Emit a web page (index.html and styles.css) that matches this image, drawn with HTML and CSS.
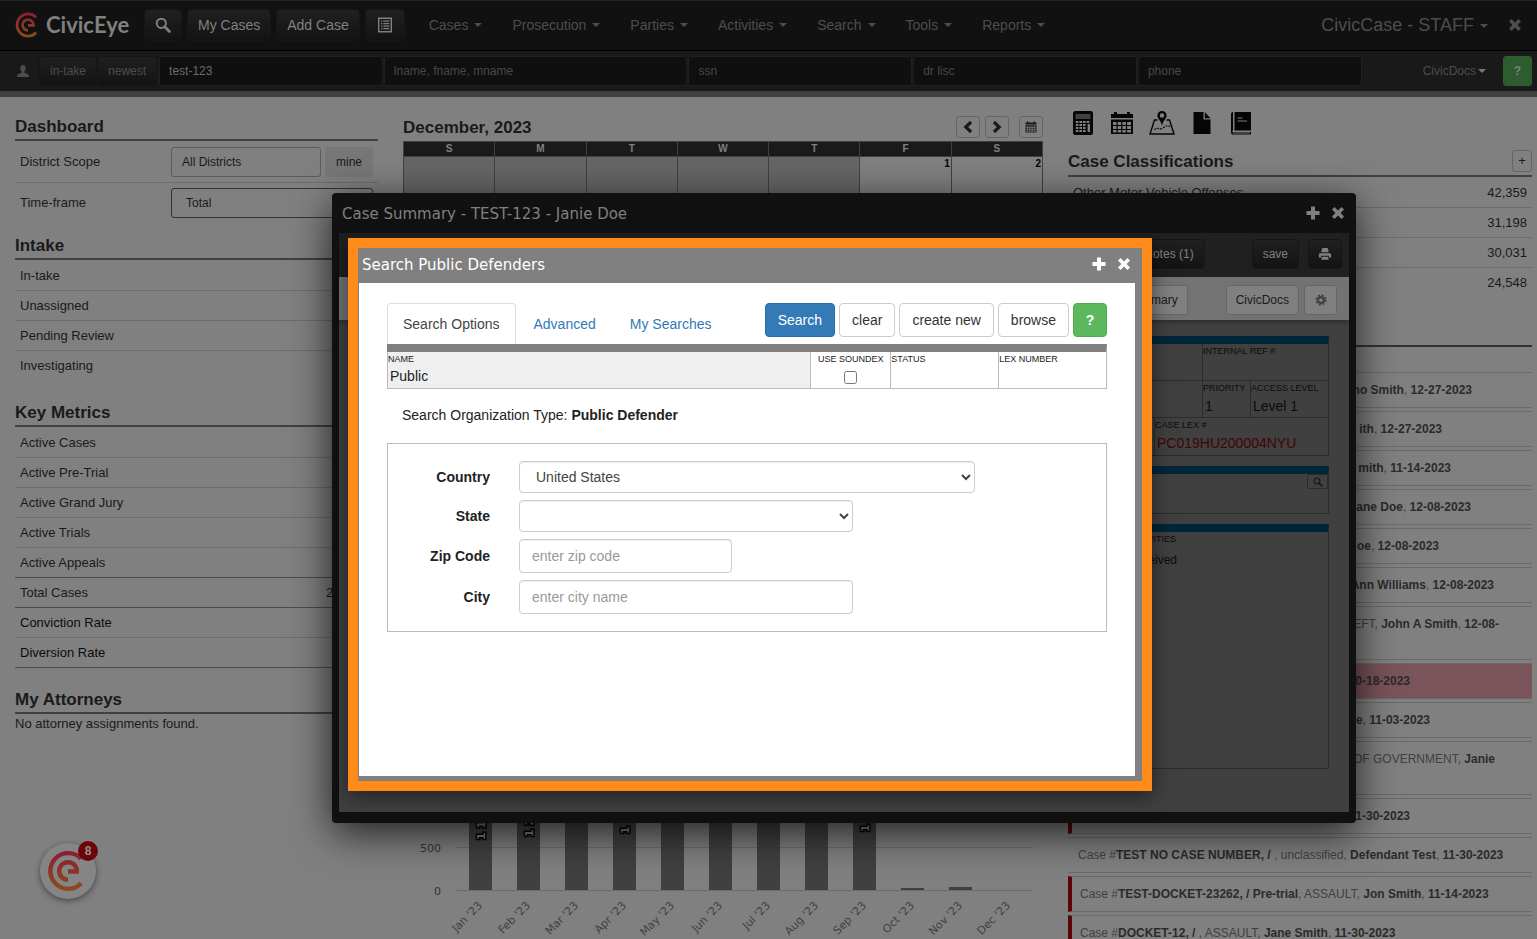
FILE: index.html
```html
<!DOCTYPE html>
<html lang="en">
<head>
<meta charset="utf-8">
<title>CivicCase - Search Public Defenders</title>
<link rel="stylesheet" href="styles.css">
</head>
<body>
<svg class="defs" width="0" height="0" aria-hidden="true">
  <defs>
    <linearGradient id="brand" x1="0" y1="0" x2="0" y2="40" gradientUnits="userSpaceOnUse">
      <stop offset="0" stop-color="#8a1c34"/><stop offset=".5" stop-color="#8c3426"/><stop offset="1" stop-color="#8a4e1c"/>
    </linearGradient>
    <symbol id="mark" viewBox="0 0 40 40">
      <g fill="none" stroke="url(#brand)" stroke-width="4.2">
        <path d="M32.6 8.400A17 17 0 1 0 32.6 31.600"/>
        <path d="M20 20.500H28.400A8.400 8.400 0 1 0 20 28.400"/>
      </g>
    </symbol>
    <symbol id="search" viewBox="0 0 16 16"><circle cx="6.3" cy="6.3" r="4.6" fill="none" stroke="currentColor" stroke-width="2"/><path d="M9.8 9.8L14.4 14.4" stroke="currentColor" stroke-width="2.8" stroke-linecap="round"/></symbol>
    <symbol id="list" viewBox="0 0 16 16"><path fill="none" stroke="currentColor" stroke-width="1.4" d="M1.7 1.2H14.3V14.8H1.7Z"/><path stroke="currentColor" stroke-width="1.3" d="M4 4.2H5.3M6.3 4.2H12.3M4 6.7H5.3M6.3 6.7H12.3M4 9.2H5.3M6.3 9.2H12.3M4 11.7H5.3M6.3 11.7H12.3"/></symbol>
    <symbol id="user" viewBox="0 0 16 16"><path fill="currentColor" d="M8 1C5.800 1 4.700 2.600 4.900 4.900C5 6.600 5.700 8 6.500 8.700V10.100L2.300 11.800C1.400 12.300 1.200 13.300 1.200 14.800H14.800C14.800 13.300 14.600 12.300 13.700 11.800L9.500 10.100V8.700C10.300 8 11 6.600 11.100 4.900C11.300 2.600 10.200 1 8 1Z"/></symbol>
    <symbol id="plus" viewBox="0 0 16 16"><path fill="currentColor" d="M6 1.500H10V6H14.500V10H10V14.500H6V10H1.500V6H6Z"/></symbol>
    <symbol id="cross" viewBox="0 0 16 16"><path fill="currentColor" d="M4.500 2L8 5.400L11.500 2L14 4.500L10.600 8L14 11.500L11.500 14L8 10.600L4.500 14L2 11.500L5.400 8L2 4.500Z"/></symbol>
    <symbol id="left" viewBox="0 0 16 16"><path fill="none" stroke="currentColor" stroke-width="3.600" d="M11.500 2.300L5.500 8L11.500 13.700"/></symbol>
    <symbol id="right" viewBox="0 0 16 16"><path fill="none" stroke="currentColor" stroke-width="3.600" d="M4.500 2.300L10.500 8L4.500 13.700"/></symbol>
    <symbol id="print" viewBox="0 0 16 16"><path fill="currentColor" d="M5 1H11L12 4V6H4V4Z"/><path fill="currentColor" d="M2 7H14L15 8V12H12.500V10H3.500V12H1V8Z"/><path fill="currentColor" d="M4.500 11H11.500L12.300 14.500H3.700Z"/></symbol>
    <symbol id="cog" viewBox="0 0 16 16"><circle cx="8" cy="8" r="3.900" fill="none" stroke="currentColor" stroke-width="2.800"/><circle cx="8" cy="8" r="6.200" fill="none" stroke="currentColor" stroke-width="2.400" stroke-dasharray="2.600 2.270"/></symbol>
    <symbol id="calendar" viewBox="0 0 24 24"><path fill="currentColor" fill-rule="evenodd" d="M1 3H4V1H7V3H17V1H20V3H23V7H1ZM1 8.500H23V23H1ZM3 11V14H6.500V11ZM7.700 11V14H11.200V11ZM12.400 11V14H15.900V11ZM17.100 11V14H21V11ZM3 15V18H6.500V15ZM7.700 15V18H11.200V15ZM12.400 15V18H15.900V15ZM17.100 15V18H21V15ZM3 19V21.500H6.500V19ZM7.700 19V21.500H11.200V19ZM12.400 19V21.500H15.900V19ZM17.100 19V21.500H21V19Z"/></symbol>
    <symbol id="calc" viewBox="0 0 24 24"><rect x="2" y="0" width="20" height="24" rx="2.500" fill="currentColor"/><rect x="4.500" y="3" width="15" height="5" fill="#404040"/><path stroke="#808080" stroke-width="2" stroke-dasharray="2.600 1" d="M4.800 11H19.400M4.800 14H15.500M4.800 17H15.500M4.800 20H15.500"/><path stroke="#808080" stroke-width="2.400" d="M17.800 13V21"/></symbol>
    <symbol id="map" viewBox="0 0 26 24"><path fill="none" stroke="currentColor" stroke-width="1.400" d="M8.500 9H5.500L1 23H25L20.500 9H17.500"/><path fill="none" stroke="currentColor" stroke-width="1.300" stroke-dasharray="1.800 1.200" d="M5.500 18.500C9 16 11 19 14 17S18 14 21 15.500"/><path fill="currentColor" fill-rule="evenodd" d="M13 0A4.600 4.600 0 0 1 17.600 4.600C17.600 8 13.800 9.500 13 15C12.200 9.500 8.400 8 8.400 4.600A4.600 4.600 0 0 1 13 0ZM13 2.200A2.300 2.300 0 1 0 13 6.800A2.300 2.300 0 1 0 13 2.200Z"/></symbol>
    <symbol id="file" viewBox="0 0 24 24"><path fill="currentColor" d="M3.500 1H13.500V8.500H20.500V23H3.500ZM14.800 1L20.500 7.200H14.800Z"/></symbol>
    <symbol id="book" viewBox="0 0 24 24"><path fill="currentColor" fill-rule="evenodd" d="M2 3Q2 1 4 1V19.500Q2.800 19.800 3.200 21H22V23.500H4Q2 23.500 2 21.500ZM5.500 1H22V19.500H5.500Z"/><path stroke="#808080" stroke-width="1.200" d="M8.500 7H13.500M8.500 10H18M4 22H21"/></symbol>
  </defs>
</svg>

<header>
  <nav class="navbar">
    <a class="brand" href="#"><svg class="brand-mark"><use href="#mark"/></svg><span>CivicEye</span></a>
    <button class="dark-btn nav-btn" aria-label="Search"><svg class="i16"><use href="#search"/></svg></button>
    <button class="dark-btn nav-btn">My Cases</button>
    <button class="dark-btn nav-btn">Add Case</button>
    <button class="dark-btn nav-btn nav-list" aria-label="List"><svg class="i16"><use href="#list"/></svg></button>
    <ul class="menu">
      <li><a class="caret" href="#">Cases</a></li>
      <li><a class="caret" href="#">Prosecution</a></li>
      <li><a class="caret" href="#">Parties</a></li>
      <li><a class="caret" href="#">Activities</a></li>
      <li><a class="caret" href="#">Search</a></li>
      <li><a class="caret" href="#">Tools</a></li>
      <li><a class="caret" href="#">Reports</a></li>
    </ul>
    <a class="caret staff" href="#">CivicCase - STAFF</a>
    <button class="plain-btn nav-close" aria-label="Close"><svg class="i16"><use href="#cross"/></svg></button>
  </nav>
  <form class="quickbar">
    <button type="button" class="dark-btn quick-btn user-btn" aria-label="Person"><svg class="i14"><use href="#user"/></svg></button>
    <button type="button" class="dark-btn quick-btn">in-take</button>
    <button type="button" class="dark-btn quick-btn">newest</button>
    <div class="quick-fields">
      <input type="text" value="test-123" aria-label="Case number">
      <input type="text" placeholder="lname, fname, mname" aria-label="Name">
      <input type="text" placeholder="ssn" aria-label="SSN">
      <input type="text" placeholder="dr lisc" aria-label="Driver license">
      <input type="text" placeholder="phone" aria-label="Phone">
    </div>
    <button type="button" class="plain-btn docs-btn caret">CivicDocs</button>
    <button type="button" class="help-dim">?</button>
  </form>
</header>

<main class="columns">
  <div class="col">
    <section class="scope">
      <h2>Dashboard</h2>
      <div class="scope-row"><label for="district">District Scope</label>
        <div class="scope-ctl"><select id="district"><option>All Districts</option></select><button class="mine">mine</button></div></div>
      <div class="scope-row"><label for="frame">Time-frame</label>
        <div class="scope-ctl"><select id="frame" class="frame"><option>Total</option></select></div></div>
    </section>
    <section>
      <h2>Intake</h2>
      <table class="rows">
        <tr><td>In-take</td></tr><tr><td>Unassigned</td></tr><tr><td>Pending Review</td></tr><tr class="last"><td>Investigating</td></tr>
      </table>
    </section>
    <section>
      <h2>Key Metrics</h2>
      <table class="rows">
        <tr><td>Active Cases</td><td></td></tr><tr><td>Active Pre-Trial</td><td></td></tr><tr><td>Active Grand Jury</td><td></td></tr><tr><td>Active Trials</td><td></td></tr>
        <tr class="strong"><td>Active Appeals</td><td></td></tr><tr class="strong"><td>Total Cases</td><td class="num">222,195</td></tr>
        <tr class="rate"><td>Conviction Rate</td><td></td></tr><tr class="strong rate"><td>Diversion Rate</td><td></td></tr>
      </table>
    </section>
    <section>
      <h2>My Attorneys</h2>
      <p class="note">No attorney assignments found.</p>
    </section>
  </div>

  <div class="col middle">
    <div class="cal-head"><h3>December, 2023</h3>
      <button class="mini" aria-label="Previous month"><svg class="i14"><use href="#left"/></svg></button>
      <button class="mini" aria-label="Next month"><svg class="i14"><use href="#right"/></svg></button>
      <button class="mini mini-cal" aria-label="Calendar"><svg class="i12"><use href="#calendar"/></svg></button>
    </div>
    <table class="calendar">
      <thead><tr><th>S</th><th>M</th><th>T</th><th>W</th><th>T</th><th>F</th><th>S</th></tr></thead>
      <tbody><tr><td class="out"></td><td class="out"></td><td class="out"></td><td class="out"></td><td class="out"></td><td>1</td><td>2</td></tr></tbody>
    </table>
    <svg class="chart" viewBox="0 0 640 180" role="img" aria-label="Cases by month">
      <path stroke="#6c6c6c" d="M53 88.500H630"/>
      <g fill="#404040">
        <rect x="66" y="30" width="23" height="101"/><rect x="114" y="30" width="23" height="101"/><rect x="162" y="30" width="23" height="101"/><rect x="210" y="30" width="23" height="101"/><rect x="258" y="30" width="23" height="101"/><rect x="306" y="30" width="23" height="101"/><rect x="354" y="30" width="23" height="101"/><rect x="402" y="30" width="23" height="101"/><rect x="450" y="30" width="23" height="101"/><rect x="498" y="129" width="23" height="2"/><rect x="546" y="128" width="23" height="3"/>
      </g>
      <path stroke="#666c74" d="M53 131.500H630"/>
      <g class="axis"><text x="38" y="93" text-anchor="end">500</text><text x="38" y="136" text-anchor="end">0</text></g>
      <g class="month" text-anchor="end">
        <text transform="translate(80 147) rotate(-45)">Jan '23</text><text transform="translate(128 147) rotate(-45)">Feb '23</text><text transform="translate(176 147) rotate(-45)">Mar '23</text><text transform="translate(224 147) rotate(-45)">Apr '23</text><text transform="translate(272 147) rotate(-45)">May '23</text><text transform="translate(320 147) rotate(-45)">Jun '23</text><text transform="translate(368 147) rotate(-45)">Jul '23</text><text transform="translate(416 147) rotate(-45)">Aug '23</text><text transform="translate(464 147) rotate(-45)">Sep '23</text><text transform="translate(512 147) rotate(-45)">Oct '23</text><text transform="translate(560 147) rotate(-45)">Nov '23</text><text transform="translate(608 147) rotate(-45)">Dec '23</text>
      </g>
      <g class="count">
        <text transform="translate(82 81) rotate(-90)">1 1</text><text transform="translate(130 78) rotate(-90)">1 2</text><text transform="translate(226 75) rotate(-90)">1</text><text transform="translate(466 73) rotate(-90)">1</text>
      </g>
    </svg>
  </div>

  <div class="col">
    <div class="tools">
      <a href="#" aria-label="Calculator"><svg class="i24"><use href="#calc"/></svg></a>
      <a href="#" aria-label="Calendar"><svg class="i24"><use href="#calendar"/></svg></a>
      <a href="#" aria-label="Map"><svg class="i26"><use href="#map"/></svg></a>
      <a href="#" aria-label="File"><svg class="i24"><use href="#file"/></svg></a>
      <a href="#" aria-label="Book"><svg class="i24"><use href="#book"/></svg></a>
    </div>
    <section class="classes">
      <div class="class-head"><h2>Case Classifications</h2><button class="mini mini-plus">+</button></div>
      <table class="rows">
        <tr><td>Other Motor Vehicle Offenses</td><td class="num">42,359</td></tr><tr><td></td><td class="num">31,198</td></tr><tr><td></td><td class="num">30,031</td></tr><tr class="last"><td></td><td class="num">24,548</td></tr>
      </table>
    </section>
    <ul class="feed">
      <li class="tail" style="--end:60px"><b>no Smith</b>, <b>12-27-2023</b></li>
      <li class="tail" style="--end:90px"><b>ith</b>, <b>12-27-2023</b></li>
      <li class="tail" style="--end:81px"><b>mith</b>, <b>11-14-2023</b></li>
      <li class="tail" style="--end:61px"><b>Jane Doe</b>, <b>12-08-2023</b></li>
      <li class="tail" style="--end:93px"><b>oe</b>, <b>12-08-2023</b></li>
      <li class="tail" style="--end:38px"><b>Ann Williams</b>, <b>12-08-2023</b></li>
      <li class="tail tall" style="--end:33px">EFT, <b>John A Smith</b>, <b>12-08-</b></li>
      <li class="tail alert" style="--end:122px"><b>0-18-2023</b></li>
      <li class="tail" style="--end:102px"><b>e</b>, <b>11-03-2023</b></li>
      <li class="tail tall" style="--end:37px">OF GOVERNMENT, <b>Janie</b></li>
      <li class="tail flag" style="--end:122px"><b>1-30-2023</b></li>
      <li>Case #<b>TEST NO CASE NUMBER, /</b> , unclassified, <b>Defendant Test</b>, <b>11-30-2023</b></li>
      <li class="flag">Case #<b>TEST-DOCKET-23262, / Pre-trial</b>, ASSAULT, <b>Jon Smith</b>, <b>11-14-2023</b></li>
      <li class="flag">Case #<b>DOCKET-12, /</b> , ASSAULT, <b>Jane Smith</b>, <b>11-30-2023</b></li>
    </ul>
  </div>
</main>

<button class="chat" aria-label="Help"><svg class="chat-mark"><use href="#mark"/></svg><span class="badge">8</span></button>

<section class="window summary" aria-label="Case Summary">
  <div class="win-title"><h1>Case Summary - TEST-123 - Janie Doe</h1>
    <button class="plain-btn" aria-label="Expand"><svg class="i16"><use href="#plus"/></svg></button><button class="plain-btn" aria-label="Close"><svg class="i16"><use href="#cross"/></svg></button></div>
  <div class="summary-inner">
    <div class="bar-dark"><button class="dark-btn bar-btn notes">Notes (1)</button><button class="dark-btn bar-btn">save</button><button class="dark-btn bar-btn print" aria-label="Print"><svg class="i14"><use href="#print"/></svg></button></div>
    <div class="bar-gray"><button class="gray-btn sum">Summary</button><button class="gray-btn">CivicDocs</button><button class="gray-btn cog" aria-label="Settings"><svg class="i12"><use href="#cog"/></svg></button></div>
    <div class="panels">
      <div class="panel">
        <div class="cells"><div class="cell ref"><span>INTERNAL REF #</span></div></div>
        <div class="cells"><div class="cell pri"><span>PRIORITY</span>1</div><div class="cell acc"><span>ACCESS LEVEL</span>Level 1</div></div>
        <div class="cells"><div class="cell lex"><span>CASE LEX #</span>PC019HU200004NYU</div></div>
      </div>
      <div class="panel short"><button class="find" aria-label="Find"><svg class="i10"><use href="#search"/></svg></button></div>
      <div class="panel grow"><div class="cell act"><span>ACTIVITIES</span><p>Received</p></div></div>
    </div>
  </div>
</section>

<section class="window finder" role="dialog" aria-label="Search Public Defenders">
  <div class="win-title"><h1>Search Public Defenders</h1>
    <button class="plain-btn" aria-label="Expand"><svg class="i16"><use href="#plus"/></svg></button><button class="plain-btn" aria-label="Close"><svg class="i16"><use href="#cross"/></svg></button></div>
  <form class="finder-body">
    <div class="finder-top">
      <div class="tabs"><a class="on" href="#">Search Options</a><a href="#">Advanced</a><a href="#">My Searches</a></div>
      <div class="actions"><button type="button" class="btn primary">Search</button><button type="button" class="btn">clear</button><button type="button" class="btn">create new</button><button type="button" class="btn">browse</button><button type="button" class="btn help">?</button></div>
    </div>
    <div class="criteria">
      <div class="crit name"><label for="name">NAME</label><input id="name" type="text" value="Public"></div>
      <div class="crit sound"><label for="soundex">USE SOUNDEX</label><input id="soundex" type="checkbox"></div>
      <div class="crit"><label for="status">STATUS</label><input id="status" type="text"></div>
      <div class="crit"><label for="lexno">LEX NUMBER</label><input id="lexno" type="text"></div>
    </div>
    <p class="org">Search Organization Type: <b>Public Defender</b></p>
    <div class="address">
      <label for="country">Country</label><select id="country" class="w-lg"><option>United States</option></select>
      <label for="state">State</label><select id="state" class="w-md"><option></option></select>
      <label for="zip">Zip Code</label><input id="zip" class="w-sm" type="text" placeholder="enter zip code">
      <label for="city">City</label><input id="city" class="w-md" type="text" placeholder="enter city name">
    </div>
  </form>
</section>
</body>
</html>
```

FILE: styles.css
```css
* { box-sizing: border-box; }
body {
  margin: 0;
  height: 100vh;
  overflow: hidden;
  position: relative;
  display: flex;
  flex-direction: column;
  background: #808080;
  color: #1a1a1a;
  font: 13px/18px "Liberation Sans", Arial, sans-serif;
}
h1, h2, h3, p, ul { margin: 0; padding: 0; }
ul { list-style: none; }
a { color: inherit; text-decoration: none; }
button, input, select { font: inherit; color: inherit; margin: 0; }
button { display: inline-flex; align-items: center; justify-content: center; padding: 0; }
svg { display: block; flex: none; }
.defs { position: absolute; }
.i10 { width: 10px; height: 10px; }
.i12 { width: 12px; height: 12px; }
.i14 { width: 14px; height: 14px; }
.i16 { width: 16px; height: 16px; }
.i24 { width: 24px; height: 24px; }
.i26 { width: 26px; height: 24px; }

/* top bars */
.navbar {
  display: flex;
  align-items: center;
  height: 51px;
  padding: 0 14px 2px 15px;
  background: #111;
  border-top: 1px solid #222;
  border-bottom: 1px solid #000;
  font-size: 14px;
  color: #4d4d4d;
}
.brand { display: flex; align-items: center; gap: 5px; width: 124px; color: #808080; font: 700 22px/26px Lato, sans-serif; }
.brand-mark { width: 26px; height: 26px; }
.dark-btn {
  border: 1px solid #161616;
  border-radius: 4px;
  background: linear-gradient(#202020, #131313);
  color: #808080;
}
.nav-btn { height: 32px; padding: 0 10px; margin-left: 5px; }
.nav-list { width: 40px; }
.menu { display: flex; margin-left: 9px; }
.menu a { display: block; padding: 0 15px; }
.caret::after {
  content: "";
  display: inline-block;
  margin-left: 6px;
  vertical-align: 3px;
  border: 4px solid transparent;
  border-top-color: currentColor;
  border-bottom: 0;
}
.staff { margin-left: auto; font-size: 18px; }
.plain-btn { border: 0; background: none; }
.nav-close { margin-left: 19px; }
.quickbar {
  display: flex;
  align-items: center;
  height: 46px;
  padding: 0 5px 0 6px;
  background: #191919;
  border-bottom: 6px solid #404040;
  color: #4d4d4d;
  font-size: 12px;
}
.quick-btn { height: 30px; padding: 0 10px; color: #4d4d4d; }
.user-btn { width: 33px; background: #191919; }
.quick-fields { flex: 1; margin-left: 2px; display: grid; grid-template-columns: 224fr 304fr 224fr 224fr 224fr; gap: 1px; }
.quick-fields input {
  min-width: 0;
  height: 30px;
  padding: 0 9px;
  background: #0f0f0f;
  border: 1px solid #202020;
  border-radius: 3px;
  color: #6a6a6a;
}
.quick-fields input::placeholder { color: #484848; opacity: 1; }
.docs-btn { margin: 0 17px 0 61px; }
.docs-btn::after { margin-left: 2px; border-top-color: #777; }
.help-dim { width: 29px; height: 30px; border: 1px solid #2a622a; border-radius: 3px; background: #2d5c2e; color: #808080; font-weight: 700; }

/* dashboard */
.columns {
  flex: 1;
  min-height: 0;
  display: grid;
  grid-template-columns: 363fr 640fr 464fr;
  grid-template-rows: minmax(0, 1fr);
  gap: 25px;
  padding: 0 5px 0 15px;
}
.col { min-width: 0; }
section { margin-bottom: 22px; }
h2, h3 { font-size: 17px; line-height: 20px; }
h2 { padding: 1px 0 2px; border-bottom: 2px solid #404040; }
.scope { margin: 19px 0 11px; }
.scope-row { display: flex; align-items: center; height: 42px; padding: 0 5px; border-bottom: 1px solid #6c6c6c; }
.scope-row:last-child { height: 41px; border: 0; padding-bottom: 1px; }
.scope-row label { width: 151px; }
.scope-ctl { flex: 1; display: flex; gap: 4px; font-size: 12px; }
.scope-ctl select { flex: 1; height: 30px; padding: 0 10px; appearance: none; background: none; border: 1px solid #5c5c5c; border-radius: 3px; }
.scope-ctl .frame { padding: 0 14px; border-color: #333; }
.mine { width: 48px; border: 0; border-radius: 3px; background: #777; }
.rows { width: 100%; margin: 1px 0 -1px; border-spacing: 0; }
.rows td { height: 30px; padding: 0 5px; border-bottom: 1px solid #6c6c6c; }
.rows .last td { border: 0; }
.rows .strong td { border-color: #4c4c4c; }
.rows .rate td { color: #0c0c0c; }
.rows .num { text-align: right; }
.note { padding-top: 1px; }

.middle { display: flex; flex-direction: column; padding-top: 18px; }
.cal-head { display: flex; align-items: center; height: 26px; padding-bottom: 2px; }
.cal-head h3 { flex: 1; padding-top: 2px; }
.mini { width: 24px; height: 22px; margin-left: 5px; border: 1px solid #666; border-radius: 3px; background: none; }
.mini-cal { margin-left: 10px; }
.mini-plus { width: 20px; }
.calendar { width: 100%; table-layout: fixed; border-collapse: collapse; font-weight: 700; font-size: 10px; line-height: 12px; }
.calendar th, .calendar td { border: 1px solid #404040; padding: 0 1px; }
.calendar th { height: 15px; background: #1a1a1a; color: #808080; }
.calendar td { height: 90px; vertical-align: top; text-align: right; color: #000; padding-top: 1px; }
.calendar .out { background: #666; }
.chart { width: 100%; height: auto; margin-top: auto; overflow: visible; }
.chart text { font-family: "DejaVu Sans", sans-serif; font-size: 11px; }
.axis { fill: #333; }
.month { fill: #404040; }
.chart .count text { font-weight: 700; fill: #808080; stroke: #000; stroke-width: 3px; paint-order: stroke; }

.tools { display: flex; gap: 15px; padding: 14px 0 14px 3px; color: #050505; }
.classes { margin-bottom: 48px; }
.class-head { display: flex; align-items: center; height: 28px; padding-bottom: 2px; border-bottom: 2px solid #404040; }
.class-head h2 { flex: 1; padding: 2px 0 0; border: 0; }
.feed { border-top: 2px solid #333; padding-top: 25px; font-size: 12px; color: #404040; }
.feed li {
  height: 36px;
  margin-bottom: 3px;
  padding: 8px 10px;
  white-space: nowrap;
  border-top: 1px solid #6a6a6a;
  border-bottom: 1px solid #6a6a6a;
}
.feed b { color: #2b2b2b; }
.feed .tall { height: 54px; }
.feed .tail { text-align: right; padding-right: var(--end); }
.feed .flag { border-left: 4px solid #5c0508; padding-left: 8px; }
.feed .alert { background: #79545b; }

.chat {
  position: absolute;
  left: 40px;
  bottom: 40px;
  width: 56px;
  height: 56px;
  border: 0;
  border-radius: 50%;
  background: #858585;
  box-shadow: 0 2px 6px rgba(0, 0, 0, .45);
}
.chat-mark { width: 42px; height: 42px; }
.badge { position: absolute; top: -2px; right: -2px; width: 20px; height: 20px; border-radius: 50%; background: #6b0608; color: #909090; font: 700 12px/20px "Liberation Sans", sans-serif; }

/* windows */
.window { position: absolute; margin: 0; display: flex; flex-direction: column; }
.win-title { display: flex; align-items: center; }
.win-title h1 { flex: 1; font: 15px/20px "DejaVu Sans", Verdana, sans-serif; }
.win-title .plain-btn { margin-left: 9px; }
.summary {
  left: 332px;
  top: 193px;
  width: 1024px;
  height: 630px;
  padding: 0 7px 11px;
  border-radius: 4px;
  background: #111;
  box-shadow: 0 10px 40px rgba(0, 0, 0, .75);
  color: #808080;
}
.summary .win-title { height: 40px; padding: 2px 3px 0; }
.summary .win-title .i16 { margin-bottom: 2px; }
.summary-inner { flex: 1; display: flex; flex-direction: column; background: #404040; color: #0c0c0c; font-size: 12px; }
.bar-dark, .bar-gray { display: flex; align-items: center; justify-content: flex-end; }
.bar-dark { height: 44px; padding: 0 7px 2px; gap: 9px; background: #202020; }
.bar-btn { height: 30px; padding: 0 10px; }
.notes { margin-right: 38px; }
.print { width: 34px; }
.bar-gray { height: 43px; padding: 2px 12px 0; gap: 5px; background: #737373; box-shadow: 0 2px 4px rgba(0, 0, 0, .3); }
.gray-btn { height: 30px; padding: 0 9px; border: 1px solid #666; border-radius: 3px; background: #808080; color: #1a1a1a; }
.sum { margin-right: 33px; }
.cog { width: 33px; color: #404040; }
.panels { flex: 1; display: flex; flex-direction: column; gap: 10px; padding: 16px 20px 43px; }
.panel { border: 1px solid #2b2b2b; border-top: 8px solid #00263a; }
.cells { display: flex; justify-content: flex-end; height: 37px; border-bottom: 1px solid #2b2b2b; }
.cells:last-child { border: 0; }
.cell { border-left: 1px solid #2b2b2b; font-size: 14px; line-height: 22px; padding-left: 2px; }
.cell span { display: block; font-size: 9px; line-height: 14px; margin-left: -2px; color: #0c0c0c; }
.ref { width: 126px; }
.pri { width: 48px; }
.acc { width: 78px; }
.lex { width: 174px; color: #400408; }
.short { height: 48px; display: flex; justify-content: flex-end; align-items: flex-start; }
.find { width: 21px; height: 15px; border: 1px solid #2b2b2b; border-radius: 2px; background: none; color: #1c1c1c; }
.grow { flex: 1; display: flex; justify-content: flex-end; }
.act { width: 201px; padding: 0; border: 0; font-size: 12px; }
.act span { margin: 0; }
.act p { padding-top: 5px; line-height: 18px; }

.finder {
  left: 348px;
  top: 238px;
  width: 804px;
  height: 553px;
  padding: 0 7px 5px 1px;
  border: 10px solid #ff8b1a;
  background: #808080;
  box-shadow: 0 5px 20px rgba(0, 0, 0, .5);
  color: #fff;
  font-size: 14px;
}
.finder .win-title { height: 35px; padding: 0 3px 2px; }
.finder .win-title .i16 { margin-bottom: 2px; }
.finder-body { flex: 1; padding: 20px 28px; background: #fff; color: #222; }
.finder-top { display: flex; justify-content: space-between; height: 41px; }
.tabs { display: flex; gap: 2px; color: #337ab7; }
.tabs a { padding: 10px 15px 0; border: 1px solid transparent; border-bottom: 0; border-radius: 4px 4px 0 0; line-height: 20px; }
.tabs .on { color: #444; border-color: #ddd; }
.actions { display: flex; gap: 4px; height: 34px; }
.btn { padding: 0 12px; border: 1px solid #ccc; border-radius: 4px; background: #fff; color: #333; }
.primary { background: #337ab7; border-color: #2e6da4; color: #fff; }
.help { width: 34px; background: #5cb85c; border-color: #4cae4c; color: #fff; font-weight: 700; }
.criteria { display: grid; grid-template-columns: 424fr 80fr 108fr 108fr; border-top: 8px solid #808080; border-right: 1px solid #bbb; }
.crit { display: flex; flex-direction: column; height: 37px; border-left: 1px solid #bbb; border-bottom: 1px solid #bbb; }
.crit label { font-size: 9px; line-height: 14px; }
.crit input[type="text"] { width: 100%; height: 20px; padding: 0 2px; border: 0; background: none; outline: 0; }
.name { background: #efefef; }
.sound { align-items: center; }
.sound input { width: 13px; height: 13px; margin-top: 5px; }
.org { padding: 16px 15px 18px; line-height: 20px; }
.address {
  display: grid;
  grid-template-columns: 102px 1fr;
  column-gap: 29px;
  row-gap: 7px;
  align-items: center;
  padding: 17px 0;
  border: 1px solid #bbb;
}
.address label { text-align: right; font-weight: 700; }
.address select, .address input { height: 34px; padding: 0 12px; border: 1px solid #ccc; border-radius: 4px; background: #fff; color: #444; box-shadow: inset 0 1px 1px rgba(0, 0, 0, .075); }
.address select { height: 32px; padding: 0 2px 0 12px; }
.address ::placeholder { color: #999; opacity: 1; }
.w-lg { width: 456px; }
.w-md { width: 334px; }
.w-sm { width: 213px; }
```
